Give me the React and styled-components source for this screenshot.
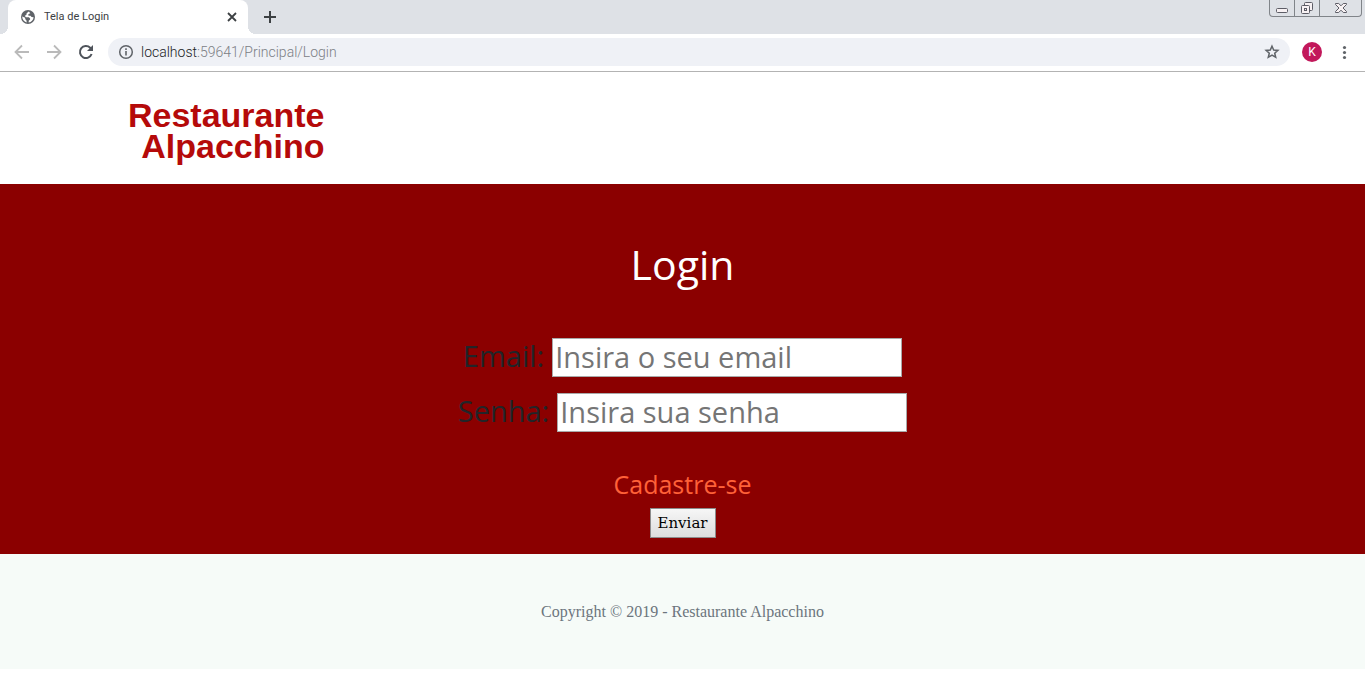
import React from "react";
import styled, { createGlobalStyle } from "styled-components";

const GlobalStyle = createGlobalStyle`
  *, *::before, *::after { box-sizing: border-box; }
  body { margin: 0; background: #fff; font-family: "Open Sans", "Noto Sans", sans-serif; }
  button, input { font: inherit; }
`;

const TabStrip = styled.div`
  display: flex;
  align-items: flex-start;
  height: 34px;
  padding-left: 8px;
  background: #dee1e6;
`;

const Tab = styled.div`
  position: relative;
  display: flex;
  align-items: center;
  gap: 8px;
  width: 240px;
  height: 34px;
  padding: 0 8px 0 12px;
  border-radius: 8px 8px 0 0;
  background: #fff;
  color: #3c4043;
  font: 11px/16px Roboto, sans-serif;

  &::before,
  &::after {
    content: "";
    position: absolute;
    bottom: 0;
    width: 8px;
    height: 8px;
  }
  &::before {
    left: -8px;
    background: radial-gradient(circle at 0 0, transparent 8px, #fff 8px);
  }
  &::after {
    right: -8px;
    background: radial-gradient(circle at 100% 0, transparent 8px, #fff 8px);
  }
`;

const TabTitle = styled.span`
  flex: 1;
`;

const IconButton = styled.button`
  display: flex;
  align-items: center;
  justify-content: center;
  width: ${(p) => p.$size || 16}px;
  height: ${(p) => p.$size || 16}px;
  padding: 0;
  border: 0;
  background: none;
  color: ${(p) => p.$color || "#5f6368"};
`;

const NewTab = styled(IconButton)`
  width: 28px;
  height: 34px;
  margin-left: 8px;
`;

const WindowControls = styled.div`
  display: flex;
  height: 17px;
  margin: 0 3px 0 auto;
  border: 1px solid #808489;
  border-top: 0;
  border-radius: 0 0 4px 4px;
`;

const WindowButton = styled.button`
  display: flex;
  align-items: center;
  justify-content: center;
  width: ${(p) => p.$width}px;
  padding: 0;
  border: 0;
  background: none;

  & + & { border-left: 1px solid #808489; }
`;

const Toolbar = styled.div`
  display: flex;
  align-items: center;
  height: 38px;
  padding: 0 12px 2px;
  border-bottom: 1px solid #b3b3b3;
`;

const NavButtons = styled.div`
  display: flex;
  gap: 12px;
  margin-right: 12px;
`;

const AddressBar = styled.div`
  display: flex;
  align-items: center;
  flex: 1;
  gap: 7px;
  height: 28px;
  padding: 0 8px 0 10px;
  border-radius: 14px;
  background: #eff1f6;
  color: #7c8085;
  font: 300 14px/20px Roboto, sans-serif;
`;

const Url = styled.span`
  flex: 1;
`;

const Host = styled.span`
  color: #202124;
`;

const Avatar = styled.button`
  width: 20px;
  height: 20px;
  margin: 0 13px 0 12px;
  padding: 0;
  border: 0;
  border-radius: 50%;
  background: #c2185b;
  color: #fff;
  font: 400 12px/20px Roboto, sans-serif;
`;

const Header = styled.header`
  height: 112px;
  padding: 28px 128px 0;
`;

const Logo = styled.div`
  display: inline-block;
  color: #b50a0a;
  font: bold 34px/31px "Liberation Sans", Arial, sans-serif;
  text-align: right;
`;

const LoginSection = styled.main`
  display: flex;
  flex-direction: column;
  align-items: center;
  padding: 52px 16px 16px;
  background: #8b0000;
`;

const Title = styled.h1`
  margin: 0 0 46px;
  color: #fff;
  font-size: 41px;
  font-weight: 400;
  line-height: 56px;
`;

const Form = styled.form`
  display: flex;
  flex-direction: column;
  align-items: center;
  gap: 16px;
`;

const Field = styled.div`
  display: flex;
  align-items: flex-start;
  gap: 8px;
  color: #212529;
  font-size: 29px;
  line-height: 36px;
`;

const TextInput = styled.input`
  width: 350px;
  height: 39px;
  padding: 0 2px 3px;
  border: 1px solid #a9a9a9;
  border-radius: 0;
  background: #fff;
  line-height: 34px;

  &::placeholder { color: #757575; opacity: 1; }
`;

const Actions = styled.div`
  display: flex;
  flex-direction: column;
  align-items: center;
  gap: 8px;
  margin-top: 20px;
`;

const SignUp = styled.a`
  color: #ff6138;
  font-size: 25px;
  line-height: 32px;
  text-decoration: none;
`;

const Submit = styled.button`
  height: 30px;
  padding: 0 7px;
  border: 1px solid #8c8c8c;
  background: linear-gradient(#f6f6f6, #dddddd);
  color: #000;
  font: 15px/28px "DejaVu Serif", serif;
`;

const Footer = styled.footer`
  padding: 48px 16px;
  background: #f6fbf8;
  color: #6c757d;
  font: 16px/19px "Liberation Serif", serif;
  text-align: center;
`;

const Stroke = ({ d, size = 16, width = 2 }) => (
  <svg width={size} height={size} viewBox="0 0 16 16" fill="none" stroke="currentColor" strokeWidth={width} aria-hidden="true">
    <path d={d} />
  </svg>
);

const Globe = () => (
  <svg width="16" height="16" viewBox="0 0 16 16" aria-hidden="true">
    <circle cx="8" cy="8" r="7" fill="#5f6368" />
    <path d="M8.8 2.4 6.6 4.3v1.3L4.7 7l1.4 1.2h2.8l1.2 1.2v1.1l-1.4 1.2v1.9c2.5-.4 4.7-2.6 4.9-5.3l-2-.3-1.2-1.2H8.5l-.2-1.6 2-1zM2.2 7.6c0 2.9 1.8 5.2 4.4 5.8v-1.7L5.2 10V8.8z" fill="#fff" />
  </svg>
);

const Info = () => (
  <svg width="16" height="16" viewBox="0 0 16 16" fill="none" stroke="#5f6368" aria-hidden="true">
    <circle cx="8" cy="8" r="6.3" strokeWidth="1.5" />
    <path d="M8 7v4.5M8 4.3V6" strokeWidth="1.6" />
  </svg>
);

const Reload = () => (
  <svg width="20" height="20" viewBox="0 0 20 20" aria-hidden="true">
    <path d="M15.6 12A6 6 0 1 1 14.2 5.8l1 1" fill="none" stroke="currentColor" strokeWidth="2" />
    <path d="M17 3v6h-6z" fill="currentColor" />
  </svg>
);

const Star = () => (
  <svg width="16" height="16" viewBox="0 0 16 16" aria-hidden="true">
    <path d="M8 2.2 9.7 6l4.2.4-3.2 2.8 1 4.1L8 11.1l-3.7 2.2 1-4.1L2.1 6.4 6.3 6z" fill="none" stroke="currentColor" strokeWidth="1.5" />
  </svg>
);

const Dots = () => (
  <svg width="16" height="16" viewBox="0 0 16 16" fill="currentColor" aria-hidden="true">
    <circle cx="8.5" cy="3.5" r="1.6" />
    <circle cx="8.5" cy="8.5" r="1.6" />
    <circle cx="8.5" cy="13.5" r="1.6" />
  </svg>
);

const Minimize = () => (
  <svg width="14" height="14" viewBox="0 0 14 14" aria-hidden="true">
    <rect x="1.5" y="7.5" width="11" height="4" rx="1" fill="#f7f1f3" stroke="#5d5d66" />
  </svg>
);

const Restore = () => (
  <svg width="14" height="14" viewBox="0 0 14 14" fill="#f7f1f3" stroke="#5d5d66" aria-hidden="true">
    <rect x="4.5" y="1.5" width="8" height="8" rx="1" />
    <rect x="1.5" y="4.5" width="8" height="8" rx="1" />
    <rect x="4.5" y="7.5" width="2" height="2" />
  </svg>
);

const CloseWindow = () => (
  <svg width="14" height="12" viewBox="0 0 14 12" aria-hidden="true">
    <path d="M1.5 1.5h3.2L7 3.8l2.3-2.3h3.2v1L9 6l3.5 3.5v1H9.3L7 8.2l-2.3 2.3H1.5v-1L5 6 1.5 2.5z" fill="#f7f1f3" stroke="#5d5d66" />
  </svg>
);

export default function App() {
  return (
    <>
      <GlobalStyle />
      <TabStrip>
        <Tab>
          <Globe />
          <TabTitle>Tela de Login</TabTitle>
          <IconButton aria-label="Fechar guia" $color="#3c4043">
            <Stroke d="M4 4l8 8M12 4l-8 8" width={1.8} />
          </IconButton>
        </Tab>
        <NewTab aria-label="Nova guia" $color="#3c4043">
          <Stroke d="M8 2v12M2 8h12" />
        </NewTab>
        <WindowControls>
          <WindowButton $width={24} aria-label="Minimizar"><Minimize /></WindowButton>
          <WindowButton $width={25} aria-label="Restaurar"><Restore /></WindowButton>
          <WindowButton $width={42} aria-label="Fechar"><CloseWindow /></WindowButton>
        </WindowControls>
      </TabStrip>
      <Toolbar>
        <NavButtons>
          <IconButton $size={20} $color="#bababa" aria-label="Voltar">
            <Stroke d="M15 8H2M8 1.5 1.5 8 8 14.5" width={1.8} />
          </IconButton>
          <IconButton $size={20} $color="#bababa" aria-label="Avançar">
            <Stroke d="M1 8h13M8 1.5 14.5 8 8 14.5" width={1.8} />
          </IconButton>
          <IconButton $size={20} $color="#4f545b" aria-label="Recarregar">
            <Reload />
          </IconButton>
        </NavButtons>
        <AddressBar>
          <Info />
          <Url><Host>localhost</Host>:59641/Principal/Login</Url>
          <IconButton $size={20} aria-label="Favoritar"><Star /></IconButton>
        </AddressBar>
        <Avatar aria-label="Perfil K">K</Avatar>
        <IconButton $size={18} aria-label="Menu"><Dots /></IconButton>
      </Toolbar>
      <Header>
        <Logo>Restaurante<br />Alpacchino</Logo>
      </Header>
      <LoginSection>
        <Title>Login</Title>
        <Form onSubmit={(e) => e.preventDefault()}>
          <Field>
            <label htmlFor="email">Email:</label>
            <TextInput id="email" type="email" placeholder="Insira o seu email" />
          </Field>
          <Field>
            <label htmlFor="senha">Senha:</label>
            <TextInput id="senha" type="password" placeholder="Insira sua senha" />
          </Field>
          <Actions>
            <SignUp href="#cadastro">Cadastre-se</SignUp>
            <Submit type="submit">Enviar</Submit>
          </Actions>
        </Form>
      </LoginSection>
      <Footer>Copyright © 2019 - Restaurante Alpacchino</Footer>
    </>
  );
}
